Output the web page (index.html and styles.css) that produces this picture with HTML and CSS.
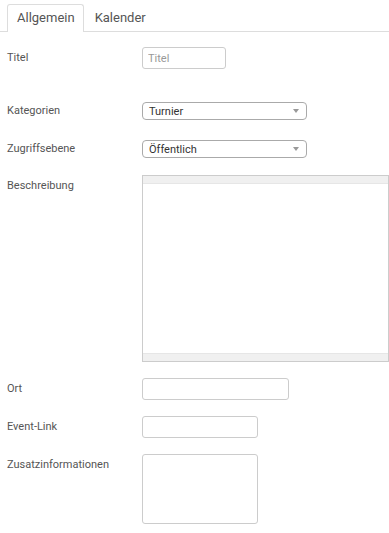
FILE: index.html
```html
<!DOCTYPE html>
<html lang="de">
<head>
    <meta charset="UTF-8">
    <meta name="viewport" content="width=device-width, initial-scale=1.0">
    <title>Event bearbeiten</title>
    <link rel="stylesheet" href="styles.css">
</head>
<body>
    <div class="tabs">
        <div class="tab active">Allgemein</div>
        <div class="tab">Kalender</div>
    </div>
    <form class="event-form">
        <div class="row row-title">
            <label for="title">Titel</label>
            <input type="text" id="title" class="input input-small" placeholder="Titel">
        </div>
        <div class="row row-select">
            <label>Kategorien</label>
            <div class="select-box">
                <span>Turnier</span>
                <svg class="arrow" width="6" height="4" viewBox="0 0 6 4"><path d="M0 0h6L3 4z" fill="#999"/></svg>
            </div>
        </div>
        <div class="row row-select row-last-select">
            <label>Zugriffsebene</label>
            <div class="select-box">
                <span>Öffentlich</span>
                <svg class="arrow" width="6" height="4" viewBox="0 0 6 4"><path d="M0 0h6L3 4z" fill="#999"/></svg>
            </div>
        </div>
        <div class="row">
            <label>Beschreibung</label>
            <div class="editor">
                <div class="editor-bar"></div>
                <div class="editor-body"></div>
                <div class="editor-bar editor-foot"></div>
            </div>
        </div>
        <div class="row">
            <label for="ort">Ort</label>
            <input type="text" id="ort" class="input input-wide">
        </div>
        <div class="row">
            <label for="link">Event-Link</label>
            <input type="text" id="link" class="input input-medium">
        </div>
        <div class="row">
            <label for="info">Zusatzinformationen</label>
            <textarea id="info" class="textarea"></textarea>
        </div>
    </form>
</body>
</html>
```

FILE: styles.css
```css
body {
    margin: 0;
    padding: 0;
    font-family: Roboto, "Liberation Sans", sans-serif;
    color: #555;
    background-color: #fff;
    overflow: hidden;
}

.tabs {
    display: flex;
    padding: 4px 0 0 7px;
    border-bottom: 1px solid #ddd;
}

.tab {
    height: 26px;
    line-height: 26px;
    padding: 0 8px 0 9px;
    font-size: 13px;
    color: #555;
    border: 1px solid transparent;
    border-bottom: none;
    margin-bottom: -1px;
}

.tab + .tab {
    padding-left: 10px;
}

.tab.active {
    background-color: #fff;
    border-color: #ddd;
    border-radius: 3px 3px 0 0;
    height: 27px;
}

.event-form {
    padding: 15px 0 0 7px;
}

.row {
    display: flex;
    align-items: flex-start;
    margin-bottom: 16px;
}

.row label {
    width: 135px;
    flex-shrink: 0;
    font-size: 11px;
    line-height: 22px;
}

.row-title {
    margin-bottom: 33px;
}

.row-select {
    margin-bottom: 20px;
}

.row-select label {
    line-height: 18px;
}

.row-last-select {
    margin-bottom: 17px;
}

.input {
    box-sizing: border-box;
    height: 22px;
    padding: 0 5px;
    border: 1px solid #ccc;
    border-radius: 3px;
    font-family: inherit;
    font-size: 11px;
    color: #333;
    outline: none;
}

.input::placeholder {
    color: #999;
}

.input-small {
    width: 84px;
}

.input-wide {
    width: 147px;
}

.input-medium {
    width: 116px;
}

.select-box {
    box-sizing: border-box;
    width: 165px;
    height: 18px;
    display: flex;
    align-items: center;
    justify-content: space-between;
    padding: 0 7px 0 6px;
    border: 1px solid #aaa;
    border-radius: 4px;
    font-size: 11px;
    color: #333;
    background-color: #fff;
}

.arrow {
    display: block;
}

.editor {
    box-sizing: border-box;
    width: 260px;
    height: 187px;
    display: flex;
    flex-direction: column;
    border: 1px solid #ccc;
}

.editor-bar {
    height: 7px;
    background-color: #f0f0f0;
    border-bottom: 1px solid #e6e6e6;
}

.editor-body {
    flex: 1;
    background-color: #fff;
}

.editor-foot {
    border-bottom: none;
    border-top: 1px solid #e6e6e6;
}

.textarea {
    box-sizing: border-box;
    width: 116px;
    height: 70px;
    margin: 0;
    border: 1px solid #ccc;
    border-radius: 3px;
    resize: none;
    outline: none;
}
```
